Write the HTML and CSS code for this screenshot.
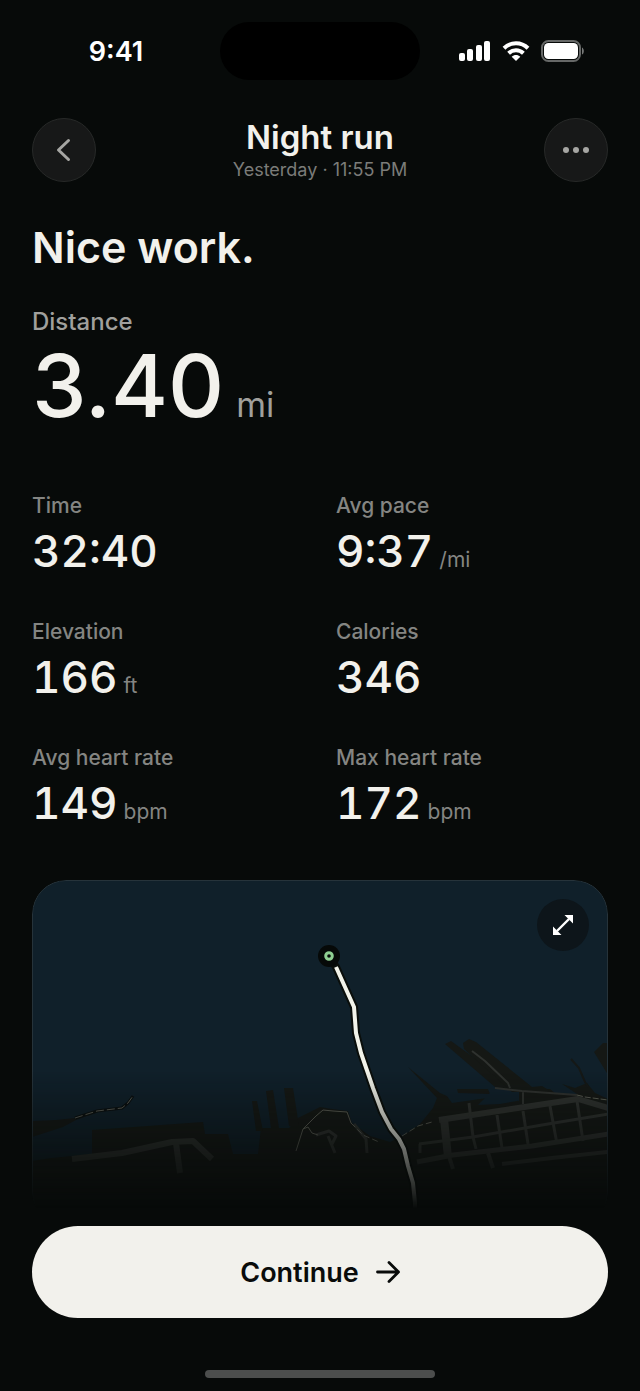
FILE: index.html
```html
<!DOCTYPE html>
<html lang="en">
<head>
    <meta charset="UTF-8">
    <meta name="viewport" content="width=device-width, initial-scale=1.0">
    <title>Night run</title>
    <link rel="stylesheet" href="styles.css">
</head>
<body>
    <div class="screen">
        <div class="status-bar">
            <div class="clock">9:41</div>
            <div class="island"></div>
            <div class="status-icons">
                <svg width="32" height="20" viewBox="0 0 32 20" fill="#fff">
                    <rect x="0" y="12" width="6" height="8" rx="2"/>
                    <rect x="8" y="8" width="6" height="12" rx="2"/>
                    <rect x="17" y="4" width="6" height="16" rx="2"/>
                    <rect x="25" y="0" width="6" height="20" rx="2"/>
                </svg>
                <svg width="28" height="20" viewBox="0 0 28 20" fill="none" stroke="#fff" stroke-width="4">
                    <path d="M2 7.2C8.8 .6 19.2 .6 26 7.2"/>
                    <path d="M6.6 12.2c4.2-4 10.600-4 14.800 0"/>
                    <path d="M14 20l-4.300-4.300c2.400-2.200 6.200-2.200 8.600 0z" fill="#fff" stroke="none"/>
                </svg>
                <svg width="44" height="22" viewBox="0 0 44 22">
                    <rect x="1" y="1" width="38" height="20" rx="6.500" fill="none" stroke="#666867" stroke-width="2"/>
                    <rect x="3" y="3" width="34" height="16" rx="4.500" fill="#fff"/>
                    <path d="M41 7.500c2.400 1 2.400 6 0 7z" fill="#777978"/>
                </svg>
            </div>
        </div>

        <header class="header">
            <button class="round-button" type="button" aria-label="Back">
                <svg width="32" height="32" viewBox="0 0 32 32" fill="none" stroke="#a6a6a3" stroke-width="3" stroke-linecap="round" stroke-linejoin="round">
                    <path d="M20.500 6.500l-10 9.500 10 9.500"/>
                </svg>
            </button>
            <div class="title">
                <h1>Night run</h1>
                <p>Yesterday · 11:55 PM</p>
            </div>
            <button class="round-button" type="button" aria-label="More">
                <svg width="32" height="32" viewBox="0 0 32 32" fill="#a6a6a3">
                    <circle cx="6" cy="16" r="3"/>
                    <circle cx="16" cy="16" r="3"/>
                    <circle cx="26" cy="16" r="3"/>
                </svg>
            </button>
        </header>

        <main class="content">
            <h2>Nice work.</h2>

            <div class="distance">
                <div class="distance-label">Distance</div>
                <div class="distance-value">3.40<span>mi</span></div>
            </div>

            <dl class="stats">
                <div class="stat">
                    <dt>Time</dt>
                    <dd>32:40</dd>
                </div>
                <div class="stat">
                    <dt>Avg pace</dt>
                    <dd>9:37<span>/mi</span></dd>
                </div>
                <div class="stat">
                    <dt>Elevation</dt>
                    <dd>166<span>ft</span></dd>
                </div>
                <div class="stat">
                    <dt>Calories</dt>
                    <dd>346</dd>
                </div>
                <div class="stat">
                    <dt>Avg heart rate</dt>
                    <dd>149<span>bpm</span></dd>
                </div>
                <div class="stat">
                    <dt>Max heart rate</dt>
                    <dd>172<span>bpm</span></dd>
                </div>
            </dl>

            <div class="map">
                <svg class="map-canvas" viewBox="0 0 576 344" preserveAspectRatio="xMidYMin slice">
                    <!-- land -->
                    <g fill="#151815">
                        <path d="M0 240L24 239L43 237L66 230L72 229L44 239L31 246L0 256z"/>
                        <path d="M0 280L20 277L60 273V249L171 241L173 253H196L201 273H226L229 247H257L266 237L288 226L300 228L316 230L320 242L338 255L358 261L371 255L388 243L401 227L405 217L376 186L408 212L415 215L420 222L448 218L463 216L487 220V208L518 208L524 213L545 213L530 203L543 207L555 202L563 212L576 218V344H0z"/>
                        <path d="M220 220l5 0 6 30h-7zM234 210l7-1 6 38h-8zM252 207h9l6 38h-10z"/>
                        <path d="M413 163L419 160L470 197L484 211L463 206z"/>
                        <path d="M431 162L437 158L444 161L500 206L510 205L520 211L480 211L432 168z"/>
                        <path d="M562 171L571 162H576V194z"/>
                        <path d="M425 208L456 208L458 213L426 212z"/>
                    </g>
                    <path d="M539 178l8 9 6 14 3 5" fill="none" stroke="#151816" stroke-width="2"/>
                    <path d="M458 212l27 0v8l-17 3-22 1z" fill="#10202a"/>

                    <!-- streets -->
                    <g class="roads">
                        <path d="M407 239L546 218L576 227" stroke-width="6"/>
                        <path d="M440 170L453 180L476 202L478 207M463 207L490 210L545 214M491 210V223" stroke-width="2"/>
                        <path d="M412 238L416 276" stroke-width="8"/>
                        <path d="M437 222L441 256L444 268M465 234L470 267M491 230L496 263M518 225L525 263M545 220L551 260" stroke-width="3"/>
                        <path d="M387 263L441 256L510 244L576 233M388 263V272" stroke-width="3"/>
                        <path d="M385 281L421 274L500 265L576 253" stroke-width="5"/>
                        <path d="M470 283L520 277L576 271" stroke-width="4"/>
                        <path d="M456 272L461 287M416 272L421 288" stroke-width="4"/>
                        <path d="M40 278L90 272L140 261L161 260L180 278M144 262L148 292" stroke-width="6"/>
                        <path d="M284 254L297 250L304 255L300 263M296 255l7 17M322 243L334 258L335 272" stroke-width="3"/>
                    </g>
                    <g class="coast">
                        <path d="M43 237L65 230L90 227L96 222L101 215" stroke="#0a0f10" stroke-width="3"/>
                        <path d="M43 237L65 230L90 227L96 222L101 215" stroke-dasharray="8 3"/>
                        <path d="M264 270L271 248L284 235L291 229L301 230L315 231L319 242"/>
                        <path d="M271 248L276 246L280 252L286 254"/>
                        <path d="M319 242L331 254L347 261M370 255L386 245L400 241" stroke-dasharray="6 3"/>
                        <path d="M545 214L553 216L576 219" stroke-dasharray="6 2"/>
                    </g>

                    <!-- run -->
                    <path class="route-casing" d="M297 76L304 86L322 126L324 152L329 172L341 207L350 231L359 248L367 258L372 268L376 285L381 302L383 322V344"/>
                    <path class="route" d="M304 86L322 126L324 152L329 172L341 207L350 231L359 248L367 258L372 268L376 285L381 302L383 322V344"/>
                    <circle cx="297" cy="75" r="11" fill="#060908"/>
                    <circle cx="297" cy="75" r="3.300" fill="none" stroke="#8fcf92" stroke-width="3"/>
                </svg>
                <button class="expand-button" type="button" aria-label="Expand map">
                    <svg width="24" height="24" viewBox="0 0 24 24" fill="#fff">
                        <path d="M6 18L18 6" stroke="#fff" stroke-width="2.400"/>
                        <path d="M13.500 2H22v8.500zM2 13.500V22h8.500z"/>
                    </svg>
                </button>
            </div>

            <button class="continue" type="button">
                Continue
                <svg width="24" height="24" viewBox="0 0 24 24" fill="none" stroke="#090b0a" stroke-width="2.800" stroke-linecap="round" stroke-linejoin="round">
                    <path d="M1.500 12h21M13 2.500l9.500 9.500-9.500 9.500"/>
                </svg>
            </button>
        </main>

        <div class="home-indicator"></div>
    </div>
</body>
</html>
```
FILE: styles.css
```css
* {
    box-sizing: border-box;
}
body {
    margin: 0;
    background-color: #070a09;
    color: #f2f1ec;
    font-family: Inter, sans-serif;
}
h1, h2, p, dl, dd {
    margin: 0;
}
button {
    border: none;
    padding: 0;
    font-family: inherit;
    cursor: pointer;
}
svg {
    display: block;
}
.screen {
    min-height: 100vh;
    display: flex;
    flex-direction: column;
}
.status-bar {
    display: grid;
    grid-template-columns: 1fr 200px 1fr;
    align-items: center;
    padding-top: 22px;
}
.clock {
    justify-self: center;
    padding-left: 12px;
    color: #fff;
    font-size: 27px;
    font-weight: 600;
}
.island {
    height: 58px;
    border-radius: 29px;
    background-color: #000;
}
.status-icons {
    display: flex;
    align-items: center;
    justify-content: center;
    gap: 11px;
    padding-right: 16px;
}
.header {
    display: flex;
    align-items: center;
    justify-content: space-between;
    padding: 37px 32px 0;
}
.round-button {
    display: flex;
    align-items: center;
    justify-content: center;
    width: 64px;
    height: 64px;
    border: 1px solid #272928;
    border-radius: 50%;
    background-color: #171818;
}
.title {
    text-align: center;
}
.title h1 {
    font-size: 33px;
    font-weight: 600;
    line-height: 40px;
}
.title p {
    color: #7b7c79;
    font-size: 18px;
    line-height: 26px;
}
.content {
    padding: 0 32px;
}
.content h2 {
    margin-top: 36px;
    font-size: 43px;
    font-weight: 600;
    line-height: 56px;
}
.distance {
    margin-top: 32px;
}
.distance-label {
    color: #a0a09d;
    font-size: 24px;
    font-weight: 500;
    line-height: 30px;
}
.distance-value {
    font-size: 87px;
    font-weight: 500;
    line-height: 98px;
}
.distance-value span {
    margin-left: 12px;
    color: #a0a09d;
    font-size: 34px;
    font-weight: 400;
    line-height: 1;
}
.stats {
    display: grid;
    grid-template-columns: 1fr 1fr;
    column-gap: 32px;
    row-gap: 36px;
    margin-top: 55px;
}
.stat dt {
    color: #848582;
    font-size: 21px;
    font-weight: 500;
    line-height: 32px;
}
.stat dd {
    font-size: 44px;
    font-weight: 500;
    font-variant-numeric: tabular-nums;
    line-height: 58px;
}
.stat span {
    margin-left: 6px;
    color: #848582;
    font-size: 21px;
    font-weight: 400;
    line-height: 1;
}
.map {
    position: relative;
    height: 346px;
    margin-top: 48px;
    border: 1px solid #26333a;
    border-radius: 34px;
    background-color: #10202a;
    overflow: hidden;
    -webkit-mask-image: linear-gradient(#000 55%, transparent 95%);
    mask-image: linear-gradient(#000 55%, transparent 95%);
}
.map-canvas {
    width: 100%;
    height: 100%;
}
.roads {
    fill: none;
    stroke: #2f322f;
    stroke-linejoin: round;
}
.coast {
    fill: none;
    stroke: #5c5e55;
    stroke-width: 1;
}
.route-casing {
    fill: none;
    stroke: #0a0e0b;
    stroke-width: 8;
    stroke-linejoin: round;
}
.route {
    fill: none;
    stroke: #f2f3ea;
    stroke-width: 4;
    stroke-linejoin: round;
}
.expand-button {
    position: absolute;
    top: 18px;
    right: 18px;
    display: flex;
    align-items: center;
    justify-content: center;
    width: 52px;
    height: 52px;
    border-radius: 50%;
    background-color: #0d151a;
}
.continue {
    display: flex;
    align-items: center;
    justify-content: center;
    gap: 17px;
    width: 100%;
    height: 92px;
    border-radius: 46px;
    background-color: #f2f1ec;
    color: #090b0a;
    font-size: 27px;
    font-weight: 600;
}
.home-indicator {
    width: 36%;
    height: 8px;
    margin: auto auto 13px;
    border-radius: 4px;
    background-color: #4c4e4d;
}
```
